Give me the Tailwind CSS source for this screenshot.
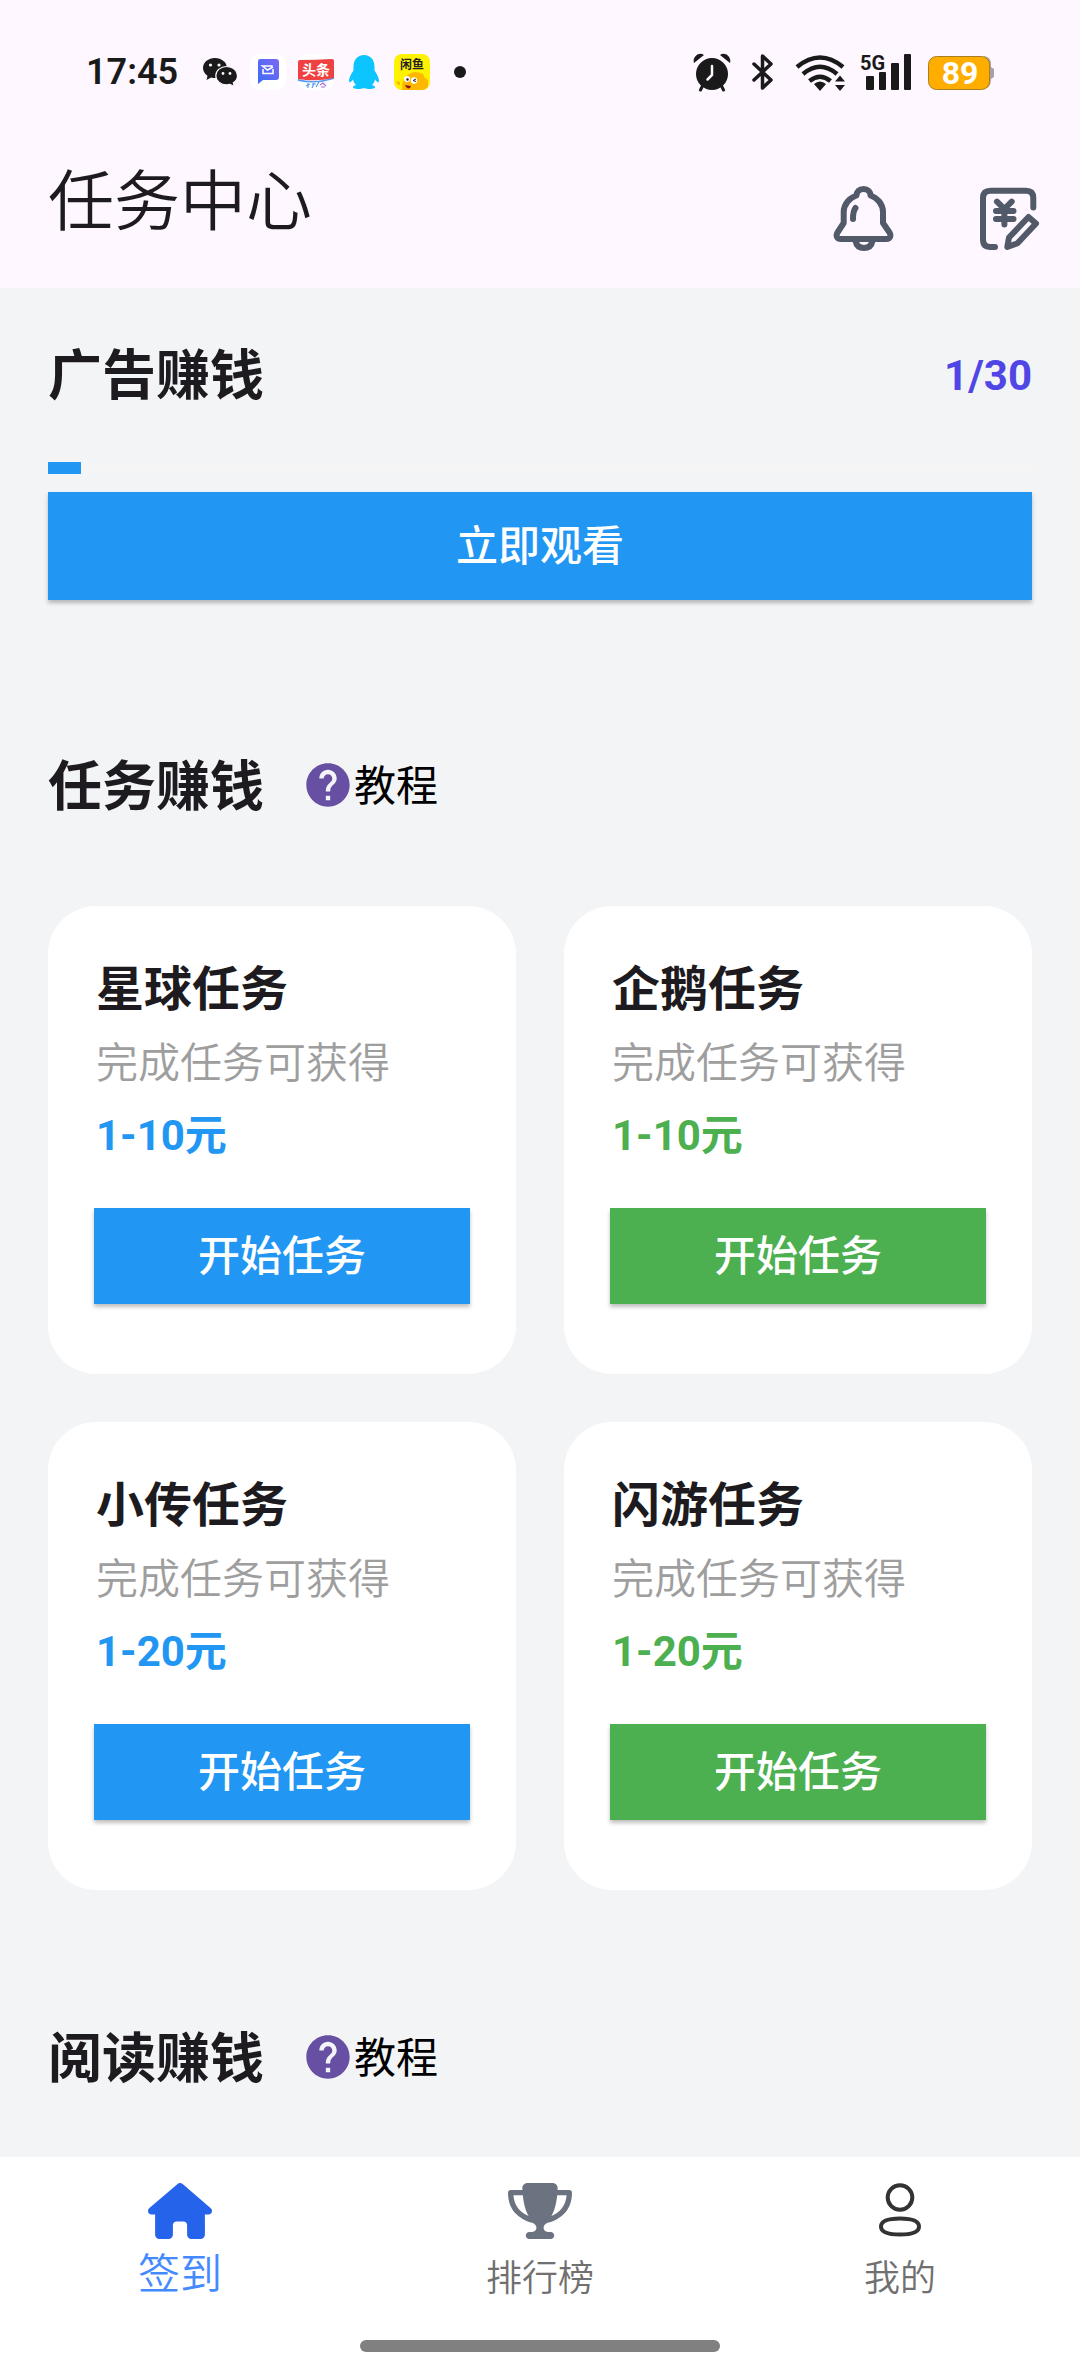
<!doctype html>
<html lang="zh-CN">
<head>
	<meta charset="utf-8"/>
	<meta name="viewport" content="width=device-width, initial-scale=1.0">
	<title>任务中心</title>
	<script src="https://cdn.jsdelivr.net/npm/@tailwindcss/browser@4"></script>
</head>
<body class="bg-gray-100 text-[#1d1b20] font-['Roboto','Noto_Sans_CJK_SC',sans-serif]">
	<!-- help icon, used by the section headings -->
	<svg class="hidden">
		<symbol id="help" viewBox="0 0 24 24">
			<path d="M12 2C6.48 2 2 6.48 2 12s4.48 10 10 10 10-4.48 10-10S17.52 2 12 2zm1 17h-2v-2h2v2zm2.07-7.75l-.9.92C13.45 12.9 13 13.5 13 15h-2v-.5c0-1.1.45-2.1 1.17-2.83l1.24-1.26c.37-.36.59-.86.59-1.41 0-1.1-.9-2-2-2s-2 .9-2 2H8c0-2.21 1.79-4 4-4s4 1.79 4 4c0 .88-.36 1.68-.93 2.25z"/>
		</symbol>
	</svg>
	<div class="flex flex-col min-h-screen">
		<header class="bg-[#fef7ff]">
			<!-- status bar -->
			<div class="flex items-center justify-between h-36 px-[86px] text-[#1a1a1a]">
				<div class="flex items-center gap-3">
					<span class="text-4xl font-semibold mr-3">17:45</span>
					<svg class="size-9" viewBox="0 0 36 36">
						<path fill="#1a1a1a" d="M13 4C6.500 4 1 8.200 1 14c0 3.200 1.700 5.900 4.500 7.700L4.500 26l4.700-2.500c1.200.4 2.500.5 3.800.5 6.600 0 12-4.400 12-10S19.600 4 13 4z"/>
						<path fill="#1a1a1a" stroke="#fef7ff" stroke-width="1.200" d="M24.500 12.500c-5.900 0-10.700 4-10.700 9.200s4.800 9.200 10.700 9.200c1.200 0 2.400-.2 3.500-.5l4.300 2.200-1-3.800c2.600-1.700 4.200-4.200 4.200-7.100 0-5.200-5-9.200-11-9.200z"/>
						<g fill="#fef7ff"><circle cx="8.500" cy="11" r="1.600"/><circle cx="17" cy="11" r="1.600"/><circle cx="21" cy="19.500" r="1.400"/><circle cx="28" cy="19.500" r="1.400"/></g>
					</svg>
					<svg class="size-9" viewBox="0 0 36 36">
						<defs><linearGradient id="msg" x1="0" y1="1" x2="1" y2="0"><stop offset="0" stop-color="#3b6cf5"/><stop offset="1" stop-color="#7b68f5"/></linearGradient></defs>
						<rect width="36" height="36" rx="9" fill="#fff"/>
						<path fill="url(#msg)" d="M10 5h16q3 0 3 3v15q0 3-3 3H13l-5 4V8q0-3 2-3z"/>
						<path fill="none" stroke="#fff" stroke-width="1.500" d="M22 15v-3h-9.500l5 4 5.500-3M13 15v4.500h10V15"/>
					</svg>
					<svg class="size-9" viewBox="0 0 36 36">
						<rect width="36" height="36" rx="9" fill="#fff"/>
						<path fill="#5b9cf0" d="M0 25q18 5 36-2v2q-18 6-36 2z"/>
						<path fill="#f04142" d="M0 8q0-2 2-2 16 0 32-1 2 0 2 2v17q-18 4-36 1z"/>
						<text x="18" y="21" text-anchor="middle" font-size="14" font-weight="700" fill="#fff">头条</text>
						<path fill="none" stroke="#5a9bea" stroke-width="1.200" d="M8 32l4-2m-2-1v5m4-4h4m-2-1l-2 5m4-1l3-5"/>
						<path fill="none" stroke="#b06ae0" stroke-width="1.200" d="M22 31l3-2 3 3m-5 1h4"/>
					</svg>
					<svg class="size-9" viewBox="0 0 36 36">
						<path fill="#0cc5ff" d="M18 1C11.500 1 7.500 6 7.500 12.500v4C5 20 3 24 3 27c0 1.500 1.500 2 4-1.500.5 2.500 1.500 4 3 5.500-2 .5-3 1.300-3 2.300 0 2.200 7.500 2 11 .7 3.500 1.300 11 1.500 11-.7 0-1-1-1.800-3-2.300 1.500-1.500 2.500-3 3-5.500 2.500 3.500 4 3 4 1.500 0-3-2-7-4.500-10.500v-4C28.500 6 24.500 1 18 1z"/>
					</svg>
					<svg class="size-9" viewBox="0 0 36 36">
						<rect width="36" height="36" rx="8" fill="#fff200"/>
						<path fill="#ffb800" d="M8 36q-1-13 9-17 4-2 9 0l3 1 2 4 3 2v6q-1 4-7 4z"/>
						<path fill="#ffb800" d="M2 27l4 1v3H4z"/>
						<text x="18" y="15" text-anchor="middle" font-size="12" font-weight="700" fill="#222">闲鱼</text>
						<circle cx="13" cy="25" r="3" fill="#fff"/><circle cx="20" cy="26.500" r="3.200" fill="#fff"/>
						<circle cx="13.500" cy="25.500" r="1.200" fill="#222"/><path fill="none" stroke="#222" d="M22 25l-3 1.500 3 1"/>
						<path fill="#8c1a10" d="M11 31l6 1q-1 3-3 2.500T11 31z"/>
					</svg>
					<svg class="size-9" viewBox="0 0 36 36"><circle cx="18" cy="18" r="6" fill="#1a1a1a"/></svg>
				</div>
				<div class="flex items-center gap-4">
					<svg class="w-10 h-10" viewBox="0 0 40 40">
						<circle cx="20" cy="22" r="16" fill="#1a1a1a"/>
						<path fill="none" stroke="#1a1a1a" stroke-width="3" stroke-linecap="round" d="M10.500 34l-2 4M29.500 34l2 4"/>
						<path fill="#1a1a1a" d="M2 11C0 5 7-1 12 3zM38 11C40 5 33-1 28 3z"/>
						<path fill="none" stroke="#fef7ff" stroke-width="2.500" stroke-linecap="round" d="M20 14v9l-4.500 4.500"/>
					</svg>
					<svg class="w-[30px] h-10" viewBox="0 0 30 40">
						<path fill="none" stroke="#1a1a1a" stroke-width="3.500" stroke-linejoin="round" stroke-linecap="round" d="M6 12l17 16-8.500 8V4L23 12 6 28"/>
					</svg>
					<svg class="w-[50px] h-10 overflow-visible" viewBox="0 0 50 40">
						<g fill="none" stroke="#1a1a1a" stroke-width="4.500">
							<path d="M3 15q23-19 46 0"/><path d="M9 22q17-14.500 34 0"/><path d="M15.500 29q10.500-8.500 21 0"/>
						</g>
						<path fill="#1a1a1a" d="M20 32q6-5 12 0l-6 7zM41 29.500l5-6 5 6zM41 33h10l-5 6z"/>
					</svg>
					<svg class="w-[52px] h-10 overflow-visible" viewBox="0 0 52 40">
						<text x="0" y="18" font-size="20" font-weight="700" fill="#1a1a1a">5G</text>
						<g fill="#1a1a1a"><rect x="6" y="24" width="8" height="14" rx="1"/><rect x="19" y="20" width="7" height="18" rx="1"/><rect x="31" y="11" width="8" height="27" rx="1"/><rect x="44" y="2" width="7" height="36" rx="1"/></g>
					</svg>
					<svg class="w-[66px] h-10" viewBox="0 0 66 40">
						<path fill="#aaa0a8" d="M56 4q7 1 7 8v3l3 2v8l-3 2q0 9-7 10z"/>
						<rect x=".5" y="4.500" width="61" height="33" rx="8" fill="#ffae00" stroke="#a87f20"/>
						<text x="32" y="32" text-anchor="middle" font-size="32" font-weight="700" fill="#fff">89</text>
					</svg>
				</div>
			</div>
			<!-- app bar -->
			<div class="flex justify-between items-start h-36 pl-12 pr-9">
				<h1 class="text-[66px] leading-[118px] font-[350]">任务中心</h1>
				<div class="flex gap-[72px] pt-9 text-[#525a69]">
					<button aria-label="通知" class="size-[72px]">
						<svg viewBox="0 0 72 72" fill="none" stroke="currentColor" stroke-width="6" stroke-linecap="round" stroke-linejoin="round">
							<path d="M28.500 15.500C28.500 12 31 9 35.500 9S42.500 12 42.500 15.500C49 17.500 55 24 55 32V43L61.500 52.500C63.500 56 62 59 58.500 59H13C9 59 7.500 56 9.500 52.500L15.700 43V32C15.700 24 22 17.500 28.500 15.500ZM27.500 28Q25 31 25 39M27.500 61Q29 68 36 68T44.500 61"/>
						</svg>
					</button>
					<button aria-label="提现记录" class="size-[72px]">
						<svg viewBox="0 0 72 72" fill="none" stroke="currentColor" stroke-width="6" stroke-linecap="round" stroke-linejoin="round">
							<path d="M61.300 27.500V18Q61.300 10.700 54 10.700H18.500Q11 10.700 11 18V59.500Q11 67 18.500 67H23M25 21.700L32.400 29 39.700 21.700M24 31H41.500M24 39H41.500M32.400 30V44.500M35.300 67L37 57.500 56.500 37 64 43.500 45.500 63.300Z"/>
						</svg>
					</button>
				</div>
			</div>
		</header>

		<main class="flex-1 px-12 pt-[50px]">
			<section>
				<div class="flex items-center justify-between h-[72px]">
					<h2 class="pt-1.5 text-[54px] leading-[72px] font-bold">广告赚钱</h2>
					<span class="pt-1 text-[42px] leading-[72px] font-bold text-[#4f46e5]">1/30</span>
				</div>
				<div class="mt-[52px] h-3 bg-neutral-100" role="progressbar" aria-valuenow="1" aria-valuemax="30">
					<div class="h-3 bg-[#2196f3]" style="width: 3.35%"></div>
				</div>
				<button class="block mt-[18px] w-full h-[108px] bg-[#2196f3] text-white text-[42px] font-medium shadow-[0_3px_4px_rgba(0,0,0,0.25)]">立即观看</button>
			</section>

			<section class="mt-[149px]">
				<div class="flex items-center h-[72px]">
					<h2 class="pt-1.5 text-[54px] leading-[72px] font-bold">任务赚钱</h2>
					<a href="#" class="flex items-center ml-[38px] text-[42px] leading-[72px] text-black">
						<svg class="size-[52px] fill-[#6750a4]"><use href="#help"/></svg>
						<span class="pt-1">教程</span>
					</a>
				</div>
				<div class="grid grid-cols-2 gap-12 mt-[85px]">
					<div class="h-[468px] p-[46px] rounded-[48px] bg-white">
						<h3 class="px-0.5 pt-1 text-5xl leading-[68px] font-bold">星球任务</h3>
						<p class="px-0.5 mt-1 text-[42px] leading-[72px] font-[350] text-[#9e9e9e]">完成任务可获得</p>
						<p class="px-0.5 text-[42px] leading-[72px] font-bold text-[#2196f3]">1-10元</p>
						<button class="block mt-9 w-full h-24 bg-[#2196f3] text-white text-[42px] font-medium shadow-[0_3px_4px_rgba(0,0,0,0.25)]">开始任务</button>
					</div>
					<div class="h-[468px] p-[46px] rounded-[48px] bg-white">
						<h3 class="px-0.5 pt-1 text-5xl leading-[68px] font-bold">企鹅任务</h3>
						<p class="px-0.5 mt-1 text-[42px] leading-[72px] font-[350] text-[#9e9e9e]">完成任务可获得</p>
						<p class="px-0.5 text-[42px] leading-[72px] font-bold text-[#4caf50]">1-10元</p>
						<button class="block mt-9 w-full h-24 bg-[#4caf50] text-white text-[42px] font-medium shadow-[0_3px_4px_rgba(0,0,0,0.25)]">开始任务</button>
					</div>
					<div class="h-[468px] p-[46px] rounded-[48px] bg-white">
						<h3 class="px-0.5 pt-1 text-5xl leading-[68px] font-bold">小传任务</h3>
						<p class="px-0.5 mt-1 text-[42px] leading-[72px] font-[350] text-[#9e9e9e]">完成任务可获得</p>
						<p class="px-0.5 text-[42px] leading-[72px] font-bold text-[#2196f3]">1-20元</p>
						<button class="block mt-9 w-full h-24 bg-[#2196f3] text-white text-[42px] font-medium shadow-[0_3px_4px_rgba(0,0,0,0.25)]">开始任务</button>
					</div>
					<div class="h-[468px] p-[46px] rounded-[48px] bg-white">
						<h3 class="px-0.5 pt-1 text-5xl leading-[68px] font-bold">闪游任务</h3>
						<p class="px-0.5 mt-1 text-[42px] leading-[72px] font-[350] text-[#9e9e9e]">完成任务可获得</p>
						<p class="px-0.5 text-[42px] leading-[72px] font-bold text-[#4caf50]">1-20元</p>
						<button class="block mt-9 w-full h-24 bg-[#4caf50] text-white text-[42px] font-medium shadow-[0_3px_4px_rgba(0,0,0,0.25)]">开始任务</button>
					</div>
				</div>
			</section>

			<section class="mt-[131px] pb-12">
				<div class="flex items-center h-[72px]">
					<h2 class="pt-1.5 text-[54px] leading-[72px] font-bold">阅读赚钱</h2>
					<a href="#" class="flex items-center ml-[38px] text-[42px] leading-[72px] text-black">
						<svg class="size-[52px] fill-[#6750a4]"><use href="#help"/></svg>
						<span class="pt-1">教程</span>
					</a>
				</div>
			</section>
		</main>

		<!-- bottom navigation -->
		<nav class="h-[216px] pt-[26px] pb-[21px] flex flex-col justify-between items-center bg-white">
			<div class="grid grid-cols-3 w-full text-4xl leading-[64px] font-[350] text-[#707070]">
				<a href="#" class="flex flex-col items-center gap-2">
					<svg class="w-16 h-14 fill-[#2563eb]" viewBox="0 0 576 512" preserveAspectRatio="none"><path d="M575.8 255.500c0 18-15 32.100-32 32.100h-32l.7 160.200c0 2.700-.2 5.400-.5 8.100V472c0 22.100-17.900 40-40 40H456c-1.100 0-2.200 0-3.300-.1c-1.400 .1-2.800 .1-4.200 .1H416 392c-22.100 0-40-17.900-40-40V448 384c0-17.700-14.300-32-32-32H256c-17.700 0-32 14.300-32 32v64 24c0 22.100-17.900 40-40 40H160 128.100c-1.500 0-3-.1-4.500-.2c-1.200 .1-2.400 .2-3.600 .2H104c-22.100 0-40-17.900-40-40V360c0-.9 0-1.900 .1-2.800V287.600H32c-18 0-32-14-32-32.100c0-9 3-17 10-24L266.400 8c7-7 15-8 22-8s15 2 21 7L564.800 231.500c8 7 12 15 11 24z"/></svg>
					<span class="text-[42px] leading-[56px] text-[#448aff]">签到</span>
				</a>
				<a href="#" class="flex flex-col items-center gap-2">
					<svg class="w-16 h-14 fill-[#6b7280]" viewBox="0 0 576 512" preserveAspectRatio="none"><path d="M400 0H176c-26.500 0-48.100 21.800-47.100 48.200c.2 5.300 .4 10.600 .7 15.800H24C10.700 64 0 74.700 0 88c0 92.600 33.500 157 78.500 200.700c44.300 43.100 98.300 64.800 138.100 75.800c23.400 6.500 39.400 26 39.400 45.600c0 20.900-17 37.900-37.900 37.900H192c-17.700 0-32 14.300-32 32s14.300 32 32 32H384c17.700 0 32-14.300 32-32s-14.300-32-32-32H357.900C337 448 320 431 320 410.100c0-19.600 15.900-39.200 39.400-45.600c39.900-11 93.900-32.700 138.200-75.800C542.500 245 576 180.600 576 88c0-13.300-10.700-24-24-24H446.400c.3-5.200 .5-10.400 .7-15.800C448.100 21.800 426.500 0 400 0zM48.900 112h84.400c9.100 90.100 29.200 150.300 51.900 190.600c-24.900-11-50.800-26.500-73.200-48.300c-32-31.100-58-76-63-142.300zM464.100 254.300c-22.400 21.800-48.300 37.300-73.200 48.300c22.700-40.300 42.800-100.500 51.900-190.600h84.400c-5.100 66.300-31.100 111.200-63 142.300z"/></svg>
					<span>排行榜</span>
				</a>
				<a href="#" class="flex flex-col items-center gap-2">
					<svg class="w-16 h-14" viewBox="0 0 64 56" fill="none" stroke="#333" stroke-width="4">
						<circle cx="32" cy="14.500" r="12.300"/>
						<path d="M32 35.500c12 0 19 2 19 8s-7 8-19 8-19-2-19-8 7-8 19-8z"/>
					</svg>
					<span>我的</span>
				</a>
			</div>
			<div class="w-1/3 h-3 rounded-full bg-[#808080]"></div>
		</nav>
	</div>
</body>
</html>
